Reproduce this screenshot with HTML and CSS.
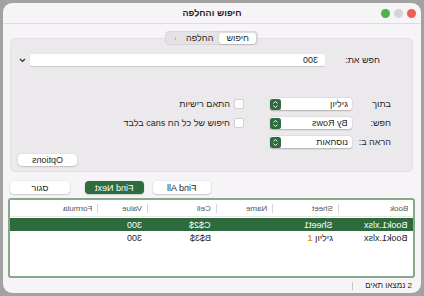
FILE: index.html
```html
<!DOCTYPE html>
<html lang="he" dir="rtl">
<head>
  <meta charset="UTF-8" />
  <meta name="viewport" content="width=device-width, initial-scale=1.0"/>
  <title>חיפוש והחלפה</title>
  <link rel="stylesheet" href="styles.css">
</head>
<body>
  <div class="window">
    <div class="title-bar">
      <div class="lights">
        <span class="light red"></span>
        <span class="light gray"></span>
        <span class="light green"></span>
      </div>
      <div class="title">חיפוש והחלפה</div>
      <div></div>
    </div>

    <div class="content">
      <div class="tabs">
        <span class="tab active">חיפוש</span>
        <span class="tab">החלפה</span>
        <span class="tab-more"></span>
      </div>

      <div class="panel">
        <div class="find-row">
          <label>חפש את:</label>
          <div class="field"><span class="flip">300</span></div>
          <span class="chevron">
            <svg width="7" height="5" viewBox="0 0 7 5"><path d="M1 1l2.5 2.5L6 1" fill="none" stroke="#333" stroke-width="1.2"/></svg>
          </span>
        </div>

        <div class="options">
          <span class="opt-label">בתוך</span>
          <div class="select">
            <span>גיליון</span>
            <svg class="stepper" width="11" height="11" viewBox="0 0 11 11"><rect width="11" height="11" rx="2.5" fill="#2f6b3e"/><path d="M3.5 4.3l2-1.8 2 1.8M3.5 6.7l2 1.8 2-1.8" fill="none" stroke="#fff"/></svg>
          </div>
          <label class="check"><span class="box"></span>התאם רישיות</label>

          <span class="opt-label">חפש:</span>
          <div class="select">
            <span class="flip">By Rows</span>
            <svg class="stepper" width="11" height="11" viewBox="0 0 11 11"><rect width="11" height="11" rx="2.5" fill="#2f6b3e"/><path d="M3.5 4.3l2-1.8 2 1.8M3.5 6.7l2 1.8 2-1.8" fill="none" stroke="#fff"/></svg>
          </div>
          <label class="check"><span class="box"></span>חיפוש של כל הח cans בלבד</label>

          <span class="opt-label">הראה ב:</span>
          <div class="select">
            <span>נוסחאות</span>
            <svg class="stepper" width="11" height="11" viewBox="0 0 11 11"><rect width="11" height="11" rx="2.5" fill="#2f6b3e"/><path d="M3.5 4.3l2-1.8 2 1.8M3.5 6.7l2 1.8 2-1.8" fill="none" stroke="#fff"/></svg>
          </div>
        </div>

        <button class="btn options-btn"><span class="flip">Options</span></button>
      </div>

      <div class="actions">
        <button class="btn"><span class="flip">Find All</span></button>
        <button class="btn primary"><span class="flip">Find Next</span></button>
        <button class="btn close">סגור</button>
      </div>

      <div class="results">
        <div class="row head">
          <div><span class="flip">Book</span></div>
          <div><span class="flip">Sheet</span></div>
          <div><span class="flip">Name</span></div>
          <div><span class="flip">Cell</span></div>
          <div><span class="flip">Value</span></div>
          <div><span class="flip">Formula</span></div>
        </div>
        <div class="row selected">
          <div><span class="flip">Book1.xlsx</span></div>
          <div><span class="flip">Sheet1</span></div>
          <div></div>
          <div><span class="flip">$C$2</span></div>
          <div><span class="flip">300</span></div>
          <div></div>
        </div>
        <div class="row">
          <div><span class="flip">Book1.xlsx</span></div>
          <div>גיליון <span class="mark">1</span></div>
          <div></div>
          <div><span class="flip">$B$3</span></div>
          <div><span class="flip">300</span></div>
          <div></div>
        </div>
      </div>

      <div class="status">
        <span>2 נמצאו תאים</span>
        <span class="divider"></span>
      </div>
    </div>
  </div>
</body>
</html>
```

FILE: styles.css
```css
* { box-sizing: border-box; }
body {
  margin: 0;
  padding: 3px;
  background: #a2a2a2;
  font-family: 'Liberation Sans', 'DejaVu Sans', sans-serif;
  font-size: 9px;
  color: #1f1f1f;
}
.flip { display: inline-block; transform: scaleX(-1); }
.window {
  width: 418px;
  height: 290px;
  background: #f6f4f6;
  border-radius: 9px;
  display: flex;
  flex-direction: column;
  overflow: hidden;
}
.title-bar {
  height: 21px;
  flex-shrink: 0;
  border-bottom: 1px solid #dedcde;
  display: grid;
  grid-template-columns: 1fr auto 1fr;
  align-items: center;
  padding: 0 5px;
}
.lights { display: flex; gap: 4px; }
.light { width: 9px; height: 9px; border-radius: 50%; }
.red { background: #ee5e55; }
.gray { background: #d6d4d6; }
.green { background: #4cb548; }
.title { font-weight: bold; }
.content {
  flex: 1;
  padding: 7px 8px 0 7px;
  display: flex;
  flex-direction: column;
}
.tabs {
  align-self: center;
  display: flex;
  align-items: center;
  height: 14px;
  padding: 0 1px 0 9px;
  background: #e4e2e4;
  border: 1px solid #d6d4d6;
  border-radius: 4px;
  margin-bottom: -7px;
  position: relative;
  z-index: 1;
}
.tab { padding: 0 6px; line-height: 11px; border-radius: 3px; }
.tab.active { background: #fff; box-shadow: 0 0.5px 1.5px rgba(0,0,0,0.25); padding: 0 7px; }
.tab-more { width: 1px; height: 3px; background: #b8b6b8; margin-right: 4px; }
.panel {
  background: #ebe9eb;
  border: 1px solid #e2e0e2;
  border-radius: 5px;
  padding: 15px 21px 5px 7px;
  display: flex;
  flex-direction: column;
}
.find-row {
  display: flex;
  align-items: center;
  height: 12px;
  margin-right: 11px;
  margin-bottom: 32px;
}
.find-row label { margin-left: 20px; }
.field {
  flex: 1;
  height: 12px;
  line-height: 12px;
  background: #fff;
  border-radius: 2px;
  box-shadow: 0 0.5px 1px rgba(0,0,0,0.15);
  padding: 0 7px;
}
.chevron { width: 9px; margin-right: 3px; display: flex; justify-content: center; }
.options {
  display: grid;
  grid-template-columns: 39px 82px auto;
  grid-auto-rows: 12px;
  row-gap: 7px;
  align-items: center;
}
.select {
  height: 12px;
  background: #fff;
  border-radius: 3px;
  box-shadow: 0 0.5px 1.5px rgba(0,0,0,0.25);
  display: flex;
  align-items: center;
  justify-content: space-between;
  padding: 0 4px 0 0;
}
.stepper { display: block; }
.check {
  display: flex;
  align-items: center;
  gap: 4px;
  margin-right: 26px;
}
.box {
  width: 10px;
  height: 10px;
  background: #fff;
  border: 1px solid #d2d0d2;
  border-radius: 2px;
}
.btn {
  font-family: inherit;
  font-size: 9px;
  color: #1f1f1f;
  border: none;
  background: #fff;
  border-radius: 4px;
  box-shadow: 0 0.5px 1.5px rgba(0,0,0,0.3);
  height: 13px;
  padding: 0;
  width: 58px;
}
.options-btn { align-self: flex-end; margin-top: 6px; height: 12px; width: 59px; }
.actions {
  display: flex;
  justify-content: flex-end;
  gap: 9px;
  margin-top: 9px;
}
.btn.primary { background: #2e6b3d; color: #fff; width: 59px; }
.btn.close { width: 60px; margin-right: 6px; }
.results {
  height: 80px;
  margin: 4px -2px 0;
  background: #fff;
  border: 2px solid #86a98a;
  border-radius: 3px;
}
.row {
  display: grid;
  grid-template-columns: 75px 66px 56px 69px 50px 1fr;
  height: 13px;
  align-items: center;
}
.row > div { padding: 0 5px; white-space: nowrap; }
.head {
  height: 17px;
  font-size: 8px;
  color: #555;
  border-bottom: 1px solid #e8e8e8;
  margin-bottom: 1px;
}
.head > div { border-left: 1px solid #d6d6d6; line-height: 9px; }
.head > div:last-child { border-left: none; }
.selected { background: #2d6b3c; color: #fff; }
.mark { color: #e09a2e; font-weight: bold; }
.status {
  flex: 1;
  display: flex;
  align-items: center;
  gap: 12px;
  padding-right: 1px;
  font-size: 8px;
}
.divider { width: 1px; height: 8px; background: #c8c6c8; }
```
